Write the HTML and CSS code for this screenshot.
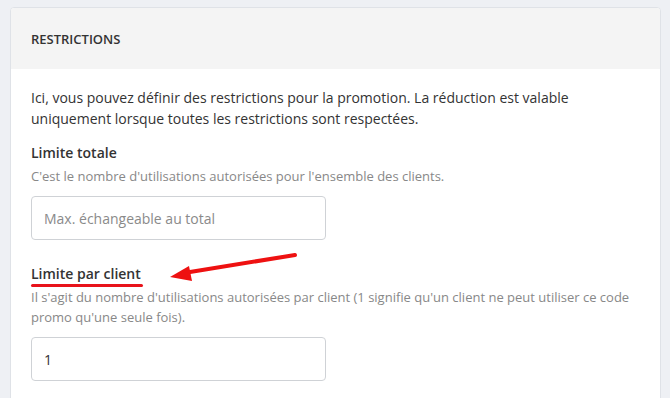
FILE: index.html
```html
<!DOCTYPE html>
<html lang="fr">
<head>
<meta charset="utf-8">
<title>Restrictions</title>
<link rel="stylesheet" href="styles.css">
</head>
<body>
<div class="page">
  <section class="card">
    <header class="card-header">RESTRICTIONS</header>
    <div class="card-body">
      <p class="intro">Ici, vous pouvez définir des restrictions pour la promotion. La réduction est valable uniquement lorsque toutes les restrictions sont respectées.</p>
      <div class="field">
        <label class="field-label">Limite totale</label>
        <p class="help">C'est le nombre d'utilisations autorisées pour l'ensemble des clients.</p>
        <input class="input" type="text" placeholder="Max. échangeable au total">
      </div>
      <div class="field field-second">
        <label class="field-label marked">Limite par client</label>
        <p class="help">Il s'agit du nombre d'utilisations autorisées par client (1 signifie qu'un client ne peut utiliser ce code promo qu'une seule fois).</p>
        <input class="input" type="text" value="1">
      </div>
    </div>
  </section>
  <svg class="arrow" width="140" height="40" viewBox="0 0 140 40" aria-hidden="true">
    <line x1="135" y1="4" x2="30" y2="21" stroke="#ee1111" stroke-width="4" stroke-linecap="round"/>
    <polygon points="10,26 29,15 32,30" fill="#ee1111"/>
  </svg>
</div>
</body>
</html>
```
FILE: styles.css
```css
html, body {
  margin: 0;
  padding: 0;
}
body {
  background: #eef0f4;
  font-family: "Open Sans", "Noto Sans", sans-serif;
  color: #333;
}
.page {
  position: relative;
  padding: 7px 9px 0 10px;
}
.card {
  background: #fff;
  border: 1px solid #dfe2e7;
  border-radius: 4px;
  overflow: hidden;
  min-height: 420px;
}
.card-header {
  height: 61px;
  background: #f4f4f4;
  display: flex;
  align-items: center;
  padding-left: 20px;
  font-size: 13px;
  font-weight: 600;
  color: #333;
}
.card-body {
  padding: 18px 20px 20px;
}
.intro {
  margin: 0;
  font-size: 14px;
  line-height: 21px;
  color: #333;
}
.field {
  margin-top: 12px;
}
.field-second {
  margin-top: 22px;
}
.field-label {
  display: inline-block;
  position: relative;
  font-size: 14px;
  font-weight: 600;
  line-height: 22px;
  color: #333;
}
.marked::after {
  content: "";
  position: absolute;
  left: 0;
  right: -2px;
  bottom: -2px;
  height: 3px;
  border-radius: 2px;
  background: #e8131b;
}
.help {
  margin: 2px 0 0;
  font-size: 13px;
  line-height: 20px;
  color: #888;
}
.input {
  display: block;
  box-sizing: border-box;
  margin-top: 10px;
  width: 295px;
  height: 44px;
  padding: 0 12px;
  border: 1px solid #cfd2d6;
  border-radius: 4px;
  font-family: inherit;
  font-size: 14px;
  color: #333;
  background: #fff;
  outline: none;
}
.input::placeholder {
  color: #8a8a8a;
}
.arrow {
  position: absolute;
  left: 160px;
  top: 251px;
}
```
